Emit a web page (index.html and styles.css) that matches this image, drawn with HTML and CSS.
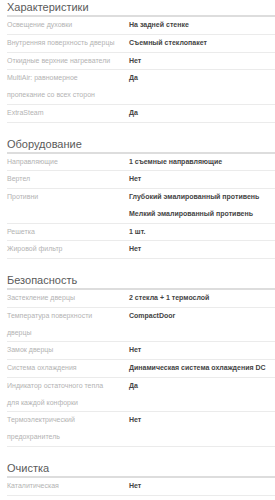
FILE: index.html
```html
<!DOCTYPE html>
<html lang="ru">
<head>
<meta charset="utf-8">
<title>Характеристики</title>
<link rel="stylesheet" href="styles.css">
</head>
<body>
<div class="specs">
  <section class="group">
    <h2 class="group-title">Характеристики</h2>
    <div class="row"><div class="label">Освещение духовки</div><div class="value">На задней стенке</div></div>
    <div class="row"><div class="label">Внутренняя поверхность дверцы</div><div class="value">Съемный стеклопакет</div></div>
    <div class="row"><div class="label">Откидные верхние нагреватели</div><div class="value">Нет</div></div>
    <div class="row"><div class="label">MultiAir: равномерное<br>пропекание со всех сторон</div><div class="value">Да</div></div>
    <div class="row"><div class="label">ExtraSteam</div><div class="value">Да</div></div>
  </section>

  <section class="group">
    <h2 class="group-title">Оборудование</h2>
    <div class="row"><div class="label">Направляющие</div><div class="value">1 съемные направляющие</div></div>
    <div class="row"><div class="label">Вертел</div><div class="value">Нет</div></div>
    <div class="row"><div class="label">Противни</div><div class="value">Глубокий эмалированный противень<br>Мелкий эмалированный противень</div></div>
    <div class="row"><div class="label">Решетка</div><div class="value">1 шт.</div></div>
    <div class="row"><div class="label">Жировой фильтр</div><div class="value">Нет</div></div>
  </section>

  <section class="group">
    <h2 class="group-title">Безопасность</h2>
    <div class="row"><div class="label">Застекление дверцы</div><div class="value">2 стекла + 1 термослой</div></div>
    <div class="row"><div class="label">Температура поверхности<br>дверцы</div><div class="value">CompactDoor</div></div>
    <div class="row"><div class="label">Замок дверцы</div><div class="value">Нет</div></div>
    <div class="row"><div class="label">Система охлаждения</div><div class="value">Динамическая система охлаждения DC</div></div>
    <div class="row"><div class="label">Индикатор остаточного тепла<br>для каждой конфорки</div><div class="value">Да</div></div>
    <div class="row"><div class="label">Термоэлектрический<br>предохранитель</div><div class="value">Нет</div></div>
  </section>

  <section class="group">
    <h2 class="group-title">Очистка</h2>
    <div class="row"><div class="label">Каталитическая</div><div class="value">Нет</div></div>
  </section>
</div>
</body>
</html>
```

FILE: styles.css
```css
html, body {
  margin: 0;
  padding: 0;
  background: #ffffff;
  overflow: hidden;
}

body {
  font-family: "Liberation Sans", Arial, sans-serif;
  color: #444444;
}

.specs {
  padding-left: 7px;
}

.group + .group {
  margin-top: 14px;
}

.group-title {
  margin: 0;
  font-size: 11px;
  line-height: 14px;
  font-weight: normal;
  color: #5a5a5a;
  padding-bottom: 1px;
  border-bottom: 2px solid #dddddd;
}

.row {
  display: grid;
  grid-template-columns: 122px 1fr;
  font-size: 7px;
  line-height: 16.75px;
  border-bottom: 1px solid #ebebeb;
}

.label {
  color: #b3b3b3;
}

.value {
  color: #444444;
  font-weight: bold;
  white-space: nowrap;
}
```
